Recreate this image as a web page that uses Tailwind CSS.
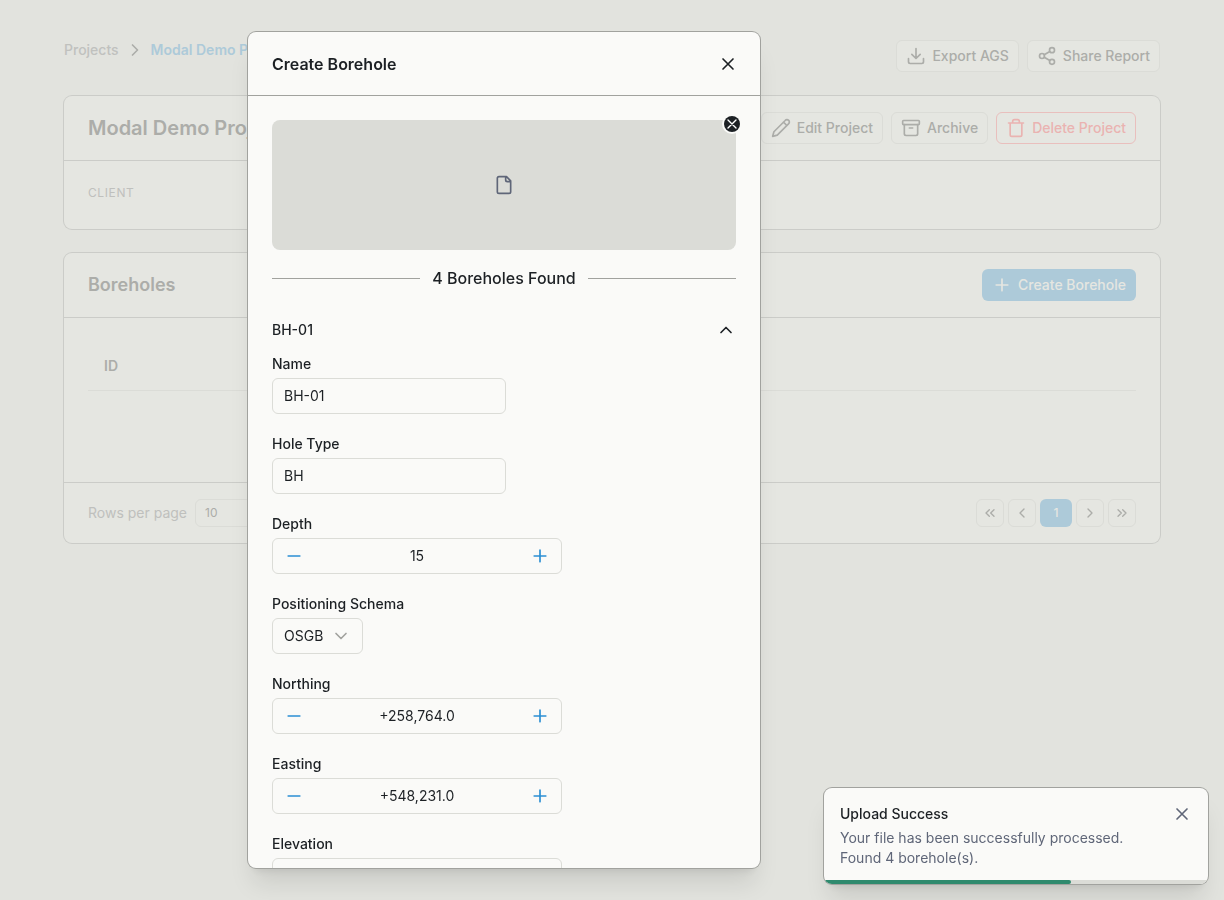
<!DOCTYPE html>
<html lang="en">

<head>
    <meta charset="UTF-8">
    <meta name="viewport" content="width=device-width, initial-scale=1.0">
    <title>Create Borehole</title>
    <script src="https://cdn.jsdelivr.net/npm/@tailwindcss/browser@4"></script>
</head>

<body class="min-h-screen bg-[#e2e3de] font-['Inter',sans-serif] text-sm text-[#1c2024]">

    <!-- Shared icons -->
    <svg class="hidden" aria-hidden="true">
        <symbol id="chevron" viewBox="0 0 24 24"><path d="m6 9 6 6 6-6" /></symbol>
        <symbol id="close" viewBox="0 0 24 24"><path d="M6 18 18 6M6 6l12 12" /></symbol>
        <symbol id="plus" viewBox="0 0 24 24"><path d="M12 5v14M5 12h14" /></symbol>
        <symbol id="minus" viewBox="0 0 24 24"><path d="M5 12h14" /></symbol>
    </svg>

    <div id="page" class="px-16 pt-10 font-medium text-[#acada9]">
        <header class="mb-6 flex h-8 items-start justify-between">
            <nav class="flex items-center gap-1.5 leading-5">
                <a href="#" class="text-[#c0c1be]">Projects</a>
                <svg class="size-5 -rotate-90 fill-none stroke-current stroke-2" stroke-linecap="round" stroke-linejoin="round"><use href="#chevron" /></svg>
                <a href="#" class="font-semibold text-[#adcad9]">Modal Demo Project</a>
            </nav>
            <div class="flex gap-2">
                <button class="flex h-8 items-center gap-1.5 rounded-md border border-[#dbdcd7] bg-[#e5e6e1] px-[9px]">
                    <svg class="size-5 fill-none stroke-current stroke-2" viewBox="0 0 24 24" stroke-linecap="round" stroke-linejoin="round"><path d="M21 15v4a2 2 0 0 1-2 2H5a2 2 0 0 1-2-2v-4M7 10l5 5 5-5M12 15V3" /></svg>
                    Export AGS
                </button>
                <button class="flex h-8 items-center gap-1.5 rounded-md border border-[#dbdcd7] bg-[#e5e6e1] px-[9px]">
                    <svg class="size-5 fill-none stroke-current stroke-2" viewBox="0 0 24 24" stroke-linecap="round" stroke-linejoin="round"><circle cx="18" cy="5" r="3" /><circle cx="6" cy="12" r="3" /><circle cx="18" cy="19" r="3" /><path d="m8.59 13.51 6.83 3.98M15.41 6.51l-6.82 3.98" /></svg>
                    Share Report
                </button>
            </div>
        </header>

        <section class="mb-6 rounded-lg bg-[#e5e6e1] ring-1 ring-[#cbccc8]">
            <div class="flex h-[65px] items-center justify-between border-b border-[#cbccc8] px-6">
                <h1 class="text-xl font-semibold">Modal Demo Project</h1>
                <div class="flex gap-2">
                    <button class="flex h-8 items-center gap-1.5 rounded-md border border-[#dbdcd7] px-[9px]">
                        <svg class="size-5 fill-none stroke-current stroke-2" viewBox="0 0 24 24" stroke-linecap="round" stroke-linejoin="round"><path d="M17 3a2.85 2.83 0 1 1 4 4L7.5 20.5 2 22l1.5-5.5ZM15 5l4 4" /></svg>
                        Edit Project
                    </button>
                    <button class="flex h-8 items-center gap-1.5 rounded-md border border-[#dbdcd7] px-[9px]">
                        <svg class="size-5 fill-none stroke-current stroke-2" viewBox="0 0 24 24" stroke-linecap="round" stroke-linejoin="round"><rect x="2" y="3" width="20" height="5" rx="1" /><path d="M4 8v11a2 2 0 0 0 2 2h12a2 2 0 0 0 2-2V8M10 12h4" /></svg>
                        Archive
                    </button>
                    <button class="flex h-8 items-center gap-1.5 rounded-md border border-[#e9bfbd] px-[9px] text-[#eab3b1]">
                        <svg class="size-5 fill-none stroke-current stroke-2" viewBox="0 0 24 24" stroke-linecap="round" stroke-linejoin="round"><path d="M3 6h18M19 6v14c0 1-1 2-2 2H7c-1 0-2-1-2-2V6M8 6V4c0-1 1-2 2-2h4c1 0 2 1 2 2v2" /></svg>
                        Delete Project
                    </button>
                </div>
            </div>
            <div class="px-6 pt-6 pb-7">
                <p class="text-xs font-normal tracking-wider text-[#bfc0bd]">CLIENT</p>
            </div>
        </section>

        <section class="rounded-lg bg-[#e5e6e1] ring-1 ring-[#cbccc8]">
            <div class="flex h-[65px] items-center justify-between border-b border-[#cbccc8] px-6">
                <h2 class="text-lg font-semibold">Boreholes</h2>
                <button class="flex h-8 items-center gap-1.5 rounded-md bg-[#adcad9] px-2.5 text-[#e5e6e1]">
                    <svg class="size-5 fill-none stroke-current stroke-2" stroke-linecap="round"><use href="#plus" /></svg>
                    Create Borehole
                </button>
            </div>
            <div class="px-6 py-6">
                <table class="w-full border-collapse">
                    <thead>
                        <tr class="h-12 border-b border-[#dbdcd7]">
                            <th class="px-4 text-left font-semibold">ID</th>
                        </tr>
                    </thead>
                    <tbody>
                        <tr class="h-17">
                            <td></td>
                        </tr>
                    </tbody>
                </table>
            </div>
            <div class="flex items-center justify-between border-t border-[#cbccc8] px-6 py-4">
                <div class="flex items-center gap-2">
                    <label for="rowsPerPage" class="font-normal text-[#bfc0bd]">Rows per page</label>
                    <select id="rowsPerPage" class="h-7 w-20 appearance-none rounded-md border border-[#dbdcd7] px-[9px] text-xs font-normal">
                        <option>10</option>
                    </select>
                </div>
                <div class="flex gap-1">
                    <button aria-label="First page" class="flex size-7 items-center justify-center rounded-md border border-[#dbdcd7]">
                        <svg class="size-4 fill-none stroke-current stroke-2" viewBox="0 0 24 24" stroke-linecap="round" stroke-linejoin="round"><path d="m11 17-5-5 5-5M18 17l-5-5 5-5" /></svg>
                    </button>
                    <button aria-label="Previous page" class="flex size-7 items-center justify-center rounded-md border border-[#dbdcd7]">
                        <svg class="size-4 rotate-90 fill-none stroke-current stroke-2" stroke-linecap="round" stroke-linejoin="round"><use href="#chevron" /></svg>
                    </button>
                    <button class="h-7 w-8 rounded-md bg-[#adcad9] text-xs text-[#e5e6e1]">1</button>
                    <button aria-label="Next page" class="flex size-7 items-center justify-center rounded-md border border-[#dbdcd7]">
                        <svg class="size-4 -rotate-90 fill-none stroke-current stroke-2" stroke-linecap="round" stroke-linejoin="round"><use href="#chevron" /></svg>
                    </button>
                    <button aria-label="Last page" class="flex size-7 items-center justify-center rounded-md border border-[#dbdcd7]">
                        <svg class="size-4 fill-none stroke-current stroke-2" viewBox="0 0 24 24" stroke-linecap="round" stroke-linejoin="round"><path d="m6 17 5-5-5-5M13 17l5-5-5-5" /></svg>
                    </button>
                </div>
            </div>
        </section>
    </div>

    <!-- Create borehole modal -->
    <div class="fixed inset-0 flex justify-center p-8 lg:pr-62">
        <div role="dialog" aria-labelledby="modalTitle" class="flex w-full max-w-lg flex-col overflow-hidden rounded-lg bg-[#fafaf8] shadow-xl ring-1 ring-[#a1a29e]">
            <div class="flex h-16 shrink-0 items-center justify-between border-b border-[#a1a29e] pr-[22px] pl-6">
                <h2 id="modalTitle" class="text-base font-semibold">Create Borehole</h2>
                <button aria-label="Close">
                    <svg class="size-5 fill-none stroke-current stroke-2" stroke-linecap="round"><use href="#close" /></svg>
                </button>
            </div>

            <div class="min-h-0 flex-1 overflow-hidden p-6">
                <div class="relative mb-4 flex h-[130px] items-center justify-center rounded-lg bg-[#dbdcd7] text-[#5f6678]">
                    <svg class="size-5 fill-none stroke-current stroke-2" viewBox="0 0 24 24" stroke-linecap="round" stroke-linejoin="round"><path d="M15 2H6a2 2 0 0 0-2 2v16a2 2 0 0 0 2 2h12a2 2 0 0 0 2-2V7ZM14 2v4a2 2 0 0 0 2 2h4" /></svg>
                    <button aria-label="Remove file" class="absolute -top-1 -right-1 flex size-4 items-center justify-center rounded-full bg-[#1c2024] text-white ring-2 ring-[#fafaf8]">
                        <svg class="size-4 fill-none stroke-current stroke-2" stroke-linecap="round"><use href="#close" /></svg>
                    </button>
                </div>

                <div class="mb-5 flex items-center gap-3">
                    <span class="h-px flex-1 bg-[#a1a29e]"></span>
                    <h3 class="text-base font-medium">4 Boreholes Found</h3>
                    <span class="h-px flex-1 bg-[#a1a29e]"></span>
                </div>

                <button aria-expanded="true" class="flex h-10 w-full items-center justify-between font-medium">
                    BH-01
                    <svg class="size-5 rotate-180 fill-none stroke-current stroke-2" stroke-linecap="round" stroke-linejoin="round"><use href="#chevron" /></svg>
                </button>

                <form class="flex flex-col items-start gap-5 pt-1">
                    <div class="flex flex-col gap-1">
                        <label for="name" class="font-medium">Name</label>
                        <input id="name" type="text" value="BH-01" class="h-9 w-[234px] rounded-md border border-[#dbdcd7] px-[11px] pb-0.5">
                    </div>
                    <div class="flex flex-col gap-1">
                        <label for="holeType" class="font-medium">Hole Type</label>
                        <input id="holeType" type="text" value="BH" class="h-9 w-[234px] rounded-md border border-[#dbdcd7] px-[11px] pb-0.5">
                    </div>
                    <div class="flex flex-col gap-1">
                        <label for="depth" class="font-medium">Depth</label>
                        <div class="flex h-9 w-[290px] items-center rounded-md border border-[#dbdcd7] px-[11px] text-[#2b8fd3]">
                            <button type="button" aria-label="Decrease depth"><svg class="size-5 fill-none stroke-current stroke-2" stroke-linecap="round"><use href="#minus" /></svg></button>
                            <input id="depth" type="text" value="15" class="min-w-0 flex-1 text-center text-[#1c2024]">
                            <button type="button" aria-label="Increase depth"><svg class="size-5 fill-none stroke-current stroke-2" stroke-linecap="round"><use href="#plus" /></svg></button>
                        </div>
                    </div>
                    <div class="flex flex-col gap-1">
                        <label for="schema" class="font-medium">Positioning Schema</label>
                        <div class="relative self-start">
                            <select id="schema" class="block h-9 appearance-none rounded-md border border-[#dbdcd7] pr-[38px] pl-[11px]">
                                <option>OSGB</option>
                            </select>
                            <svg class="pointer-events-none absolute top-2 right-3 size-5 fill-none stroke-[#a1a29e] stroke-2" stroke-linecap="round" stroke-linejoin="round"><use href="#chevron" /></svg>
                        </div>
                    </div>
                    <div class="flex flex-col gap-1">
                        <label for="northing" class="font-medium">Northing</label>
                        <div class="flex h-9 w-[290px] items-center rounded-md border border-[#dbdcd7] px-[11px] text-[#2b8fd3]">
                            <button type="button" aria-label="Decrease northing"><svg class="size-5 fill-none stroke-current stroke-2" stroke-linecap="round"><use href="#minus" /></svg></button>
                            <input id="northing" type="text" value="+258,764.0" class="min-w-0 flex-1 text-center text-[#1c2024]">
                            <button type="button" aria-label="Increase northing"><svg class="size-5 fill-none stroke-current stroke-2" stroke-linecap="round"><use href="#plus" /></svg></button>
                        </div>
                    </div>
                    <div class="flex flex-col gap-1">
                        <label for="easting" class="font-medium">Easting</label>
                        <div class="flex h-9 w-[290px] items-center rounded-md border border-[#dbdcd7] px-[11px] text-[#2b8fd3]">
                            <button type="button" aria-label="Decrease easting"><svg class="size-5 fill-none stroke-current stroke-2" stroke-linecap="round"><use href="#minus" /></svg></button>
                            <input id="easting" type="text" value="+548,231.0" class="min-w-0 flex-1 text-center text-[#1c2024]">
                            <button type="button" aria-label="Increase easting"><svg class="size-5 fill-none stroke-current stroke-2" stroke-linecap="round"><use href="#plus" /></svg></button>
                        </div>
                    </div>
                    <div class="flex flex-col gap-1">
                        <label for="elevation" class="font-medium">Elevation</label>
                        <input id="elevation" type="text" class="h-9 w-[290px] rounded-md border border-[#dbdcd7] px-[11px] text-center">
                    </div>
                </form>
            </div>
        </div>
    </div>

    <!-- Toast -->
    <div role="status" class="fixed right-4 bottom-4 w-96 overflow-hidden rounded-lg bg-[#fafaf8] p-4 leading-5 shadow-xl ring-1 ring-[#a1a29e]">
        <div class="mb-1 flex items-center justify-between">
            <h4 class="font-medium">Upload Success</h4>
            <button aria-label="Dismiss" class="text-[#5f6678]">
                <svg class="size-5 fill-none stroke-current stroke-2" stroke-linecap="round"><use href="#close" /></svg>
            </button>
        </div>
        <p class="text-[#5f6678]">Your file has been successfully processed.<br>Found 4 borehole(s).</p>
        <div class="absolute inset-x-0 bottom-0 h-1 bg-[#dbdcd7]">
            <div class="h-full rounded-r-full bg-[#2f8a6e]" style="width: 64.3%"></div>
        </div>
    </div>
</body>

</html>
